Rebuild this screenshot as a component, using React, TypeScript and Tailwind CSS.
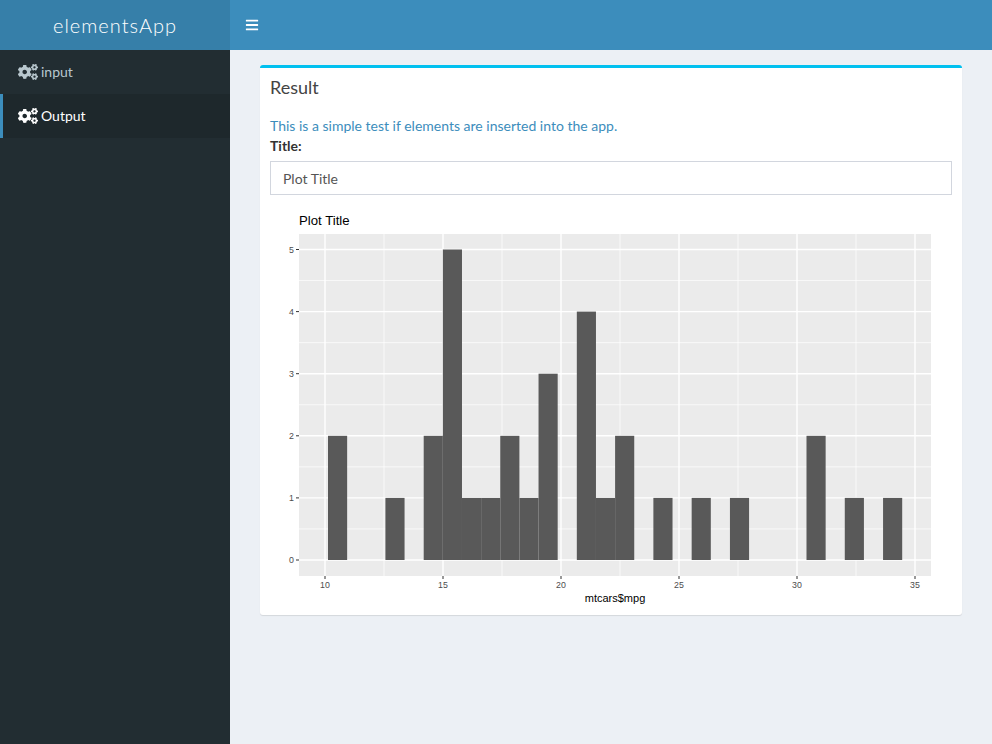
import { FaBars, FaCogs } from "react-icons/fa";

const BIN_START = 328;
const BIN_WIDTH = 19.14;
const COUNTS = [2, 0, 0, 1, 0, 2, 5, 1, 1, 2, 1, 3, 0, 4, 1, 2, 0, 1, 0, 1, 0, 1, 0, 0, 0, 2, 0, 1, 0, 1];

const xPos = (v: number) => 325 + (v - 10) * 23.6;
const yPos = (v: number) => 562 - v * 62.1;

const Plot = () => {
  const xMajor = [10, 15, 20, 25, 30, 35];
  const xMinor = [12.5, 17.5, 22.5, 27.5, 32.5];
  const yMajor = [0, 1, 2, 3, 4, 5];
  const yMinor = [0.5, 1.5, 2.5, 3.5, 4.5];
  return (
    <svg viewBox="270 207 682 400" className="block h-[400px] w-[682px]">
      <text x={299} y={227} fontSize={13.2} fill="#000" fontFamily="Liberation Sans, sans-serif">
        Plot Title
      </text>
      <rect x={299} y={236} width={632} height={342} fill="#ebebeb" />
      {yMinor.map((v) => (
        <line key={v} x1={299} x2={931} y1={yPos(v)} y2={yPos(v)} stroke="#fff" strokeWidth={0.7} />
      ))}
      {xMinor.map((v) => (
        <line key={v} x1={xPos(v)} x2={xPos(v)} y1={236} y2={578} stroke="#fff" strokeWidth={0.7} />
      ))}
      {yMajor.map((v) => (
        <line key={v} x1={299} x2={931} y1={yPos(v)} y2={yPos(v)} stroke="#fff" strokeWidth={1.4} />
      ))}
      {xMajor.map((v) => (
        <line key={v} x1={xPos(v)} x2={xPos(v)} y1={236} y2={578} stroke="#fff" strokeWidth={1.4} />
      ))}
      {COUNTS.map((c, i) =>
        c > 0 ? (
          <rect
            key={i}
            x={BIN_START + i * BIN_WIDTH}
            y={yPos(c)}
            width={BIN_WIDTH}
            height={c * 62.1}
            fill="#595959"
          />
        ) : null,
      )}
      {yMajor.map((v) => (
        <g key={v}>
          <line x1={296} x2={299} y1={yPos(v)} y2={yPos(v)} stroke="#333" strokeWidth={1} />
          <text x={294} y={yPos(v) + 3} fontSize={8.8} textAnchor="end" fill="#4d4d4d" fontFamily="Liberation Sans, sans-serif">
            {v}
          </text>
        </g>
      ))}
      {xMajor.map((v) => (
        <g key={v}>
          <line x1={xPos(v)} x2={xPos(v)} y1={578} y2={581} stroke="#333" strokeWidth={1} />
          <text x={xPos(v)} y={590} fontSize={8.8} textAnchor="middle" fill="#4d4d4d" fontFamily="Liberation Sans, sans-serif">
            {v}
          </text>
        </g>
      ))}
      <text x={615} y={604} fontSize={11} textAnchor="middle" fill="#000" fontFamily="Liberation Sans, sans-serif">
        mtcars$mpg
      </text>
    </svg>
  );
};

const App = () => {
  return (
    <div className="flex min-h-[744px] flex-col bg-[#ecf0f5] font-['Lato',sans-serif] text-sm text-[#333]">
      <header className="flex h-[50px] text-white">
        <div className="flex w-[230px] items-center justify-center bg-[#367fa9] text-xl font-light tracking-[1px]">
          elementsApp
        </div>
        <div className="flex flex-1 items-center bg-[#3c8dbc] pl-[15px]">
          <FaBars className="text-sm" />
        </div>
      </header>
      <div className="flex flex-1">
        <aside className="w-[230px] bg-[#222d32]">
          <div className="flex h-11 items-center border-l-[3px] border-transparent pl-[15px] text-[#b8c7ce]">
            <FaCogs className="w-5 text-lg" />
            <span className="ml-[3px]">input</span>
          </div>
          <div className="flex h-11 items-center border-l-[3px] border-[#3c8dbc] bg-[#1e282c] pl-[15px] text-white">
            <FaCogs className="w-5 text-lg" />
            <span className="ml-[3px]">Output</span>
          </div>
        </aside>
        <main className="flex-1 pt-[15px] pr-[30px] pl-[30px]">
          <section className="rounded-[3px] border-t-[3px] border-[#00c0ef] bg-white shadow-[0_1px_1px_rgba(0,0,0,0.1)]">
            <h3 className="px-2.5 pt-2.5 text-lg leading-[18px] text-[#444]">Result</h3>
            <div className="p-2.5 pt-5">
              <p className="leading-5 text-[#3c8dbc]">This is a simple test if elements are inserted into the app.</p>
              <label className="block leading-5 font-bold">Title:</label>
              <input
                readOnly
                value="Plot Title"
                className="mt-[5px] mb-2.5 block h-[34px] w-full border border-[#d2d6de] px-3 text-[#555] outline-none"
              />
              <Plot />
            </div>
          </section>
        </main>
      </div>
    </div>
  );
};

export default App;
